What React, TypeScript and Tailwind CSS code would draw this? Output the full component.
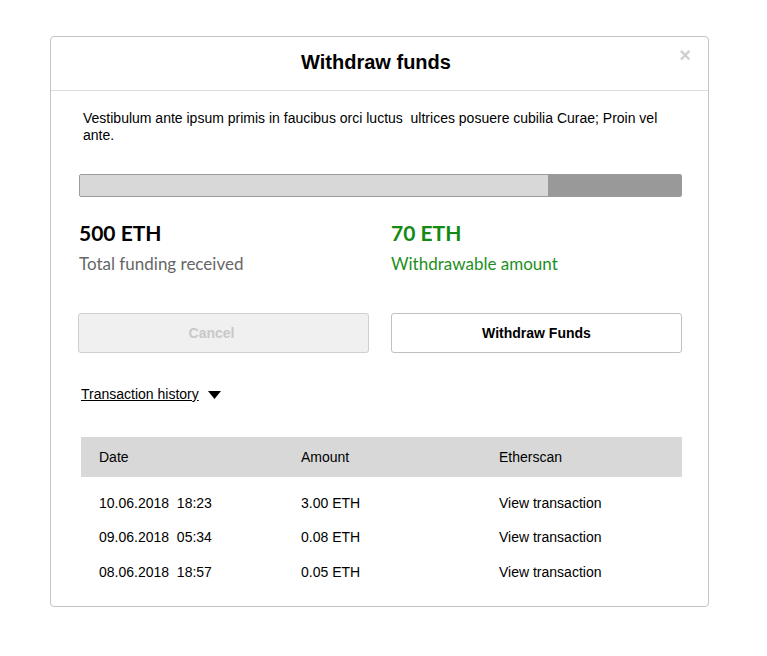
const transactions = [
  { date: "10.06.2018  18:23", amount: "3.00 ETH" },
  { date: "09.06.2018  05:34", amount: "0.08 ETH" },
  { date: "08.06.2018  18:57", amount: "0.05 ETH" },
];

const App = () => {
  return (
    <div className="min-h-screen bg-white pt-[36px] pl-[50px] font-['Liberation_Sans',Arial,sans-serif]">
      <div className="w-[659px] h-[571px] rounded border border-[#c4c4c4] bg-white">
        <div className="relative h-[54px] pb-[4px] pr-[7px] border-b border-[#dcdcdc] flex items-center justify-center">
          <h1 className="text-[20px] font-bold text-black">Withdraw funds</h1>
          <span className="absolute right-[17px] top-[8px] text-[20px] font-bold leading-none text-[#d0d0d0]">×</span>
        </div>

        <div className="pl-[28px] pr-[26px]">
          <p className="mt-[19px] pl-[4px] text-[14px] leading-[17px] text-black whitespace-pre-wrap">
            {"Vestibulum ante ipsum primis in faucibus orci luctus  ultrices posuere cubilia Curae; Proin vel ante."}
          </p>

          <div className="mt-[30px] flex h-[23px] w-[603px] overflow-hidden rounded-[2px] border border-[#9b9b9b] bg-[#d8d8d8]">
            <div className="w-[468px] bg-[#d8d8d8]" />
            <div className="flex-1 bg-[#999999]" />
          </div>

          <div className="mt-[24px] grid grid-cols-[312px_1fr] font-['Lato',sans-serif]">
            <div>
              <div className="text-[21px] font-bold leading-[24px] text-black">500 ETH</div>
              <div className="mt-[10px] text-[17px] leading-[18px] text-[#666666]">Total funding received</div>
            </div>
            <div>
              <div className="text-[21px] font-bold leading-[24px] text-[#138a13]">70 ETH</div>
              <div className="mt-[10px] text-[17px] leading-[18px] text-[#1d8f1d]">Withdrawable amount</div>
            </div>
          </div>

          <div className="mt-[40px] -ml-[1px] flex gap-[22px]">
            <button className="h-[40px] w-[291px] pr-[24px] rounded-[3px] border border-[#cfcfcf] bg-[#f0f0f0] text-[14px] font-bold text-[#c8c8c8]">
              Cancel
            </button>
            <button className="h-[40px] w-[291px] rounded-[3px] border border-[#c0c0c0] bg-white text-[14px] font-bold text-black">
              Withdraw Funds
            </button>
          </div>

          <div className="mt-[31px] ml-[2px] flex items-center gap-[9px]">
            <span className="text-[14px] text-black underline">Transaction history</span>
            <svg width="13" height="8" viewBox="0 0 13 8">
              <path d="M0 0 L13 0 L6.5 8 Z" fill="#000" />
            </svg>
          </div>

          <table className="mt-[32px] ml-[2px] w-[601px] text-[14px] text-black">
            <thead>
              <tr className="h-[40px] bg-[#d8d8d8] text-left">
                <th className="w-[200px] pl-[18px] font-normal">Date</th>
                <th className="w-[199px] pl-[20px] font-normal">Amount</th>
                <th className="pl-[19px] font-normal">Etherscan</th>
              </tr>
            </thead>
            <tbody>
              <tr className="h-[9px]" />
              {transactions.map((t) => (
                <tr key={t.date} className="h-[34.5px]">
                  <td className="pl-[18px] whitespace-pre">{t.date}</td>
                  <td className="pl-[20px]">{t.amount}</td>
                  <td className="pl-[19px]">View transaction</td>
                </tr>
              ))}
            </tbody>
          </table>
        </div>
      </div>
    </div>
  );
};

export default App;
